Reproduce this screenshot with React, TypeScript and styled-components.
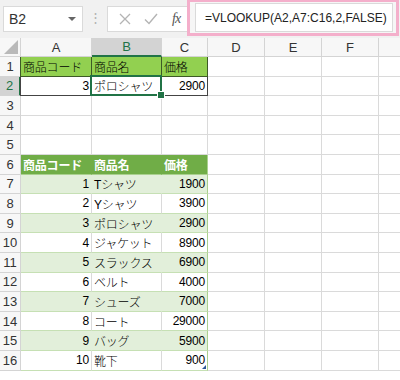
import React from 'react';
import styled, { createGlobalStyle, css } from 'styled-components';

const GlobalStyle = createGlobalStyle`
  * { box-sizing: border-box; }
  body {
    margin: 0;
    background: #ffffff;
    font-family: "Liberation Sans", "Noto Sans CJK JP", sans-serif;
    overflow: hidden;
  }
`;

const COLS = [
    { name: 'A', width: 71 },
    { name: 'B', width: 70 },
    { name: 'C', width: 46 },
    { name: 'D', width: 57 },
    { name: 'E', width: 57 },
    { name: 'F', width: 57 },
    { name: '', width: 40 },
];

type CellData = { text?: string; right?: boolean };
type RowKind = 'plain' | 'title' | 'input' | 'head' | 'band' | 'white';

const products: [string, string, string][] = [
    ['1', 'Tシャツ', '1900'],
    ['2', 'Yシャツ', '3900'],
    ['3', 'ポロシャツ', '2900'],
    ['4', 'ジャケット', '8900'],
    ['5', 'スラックス', '6900'],
    ['6', 'ベルト', '4000'],
    ['7', 'シューズ', '7000'],
    ['8', 'コート', '29000'],
    ['9', 'バッグ', '5900'],
    ['10', '靴下', '900'],
];

const rows: { kind: RowKind; cells: CellData[] }[] = [
    { kind: 'title', cells: [{ text: '商品コード' }, { text: '商品名' }, { text: '価格' }] },
    { kind: 'input', cells: [{ text: '3', right: true }, { text: 'ポロシャツ' }, { text: '2900', right: true }] },
    { kind: 'plain', cells: [] },
    { kind: 'plain', cells: [] },
    { kind: 'plain', cells: [] },
    { kind: 'head', cells: [{ text: '商品コード' }, { text: '商品名' }, { text: '価格' }] },
    ...products.map(([code, name, price], i) => ({
        kind: (i % 2 === 0 ? 'band' : 'white') as RowKind,
        cells: [{ text: code, right: true }, { text: name }, { text: price, right: true }],
    })),
];

const App: React.FC = () => {
    return (
        <Page>
            <GlobalStyle/>
            <TopBar>
                <NameBox>
                    <span>B2</span>
                    <Caret/>
                </NameBox>
                <Grip>⋮</Grip>
                <ButtonBox>
                    <svg width="12" height="12" viewBox="0 0 12 12">
                        <path d="M1 1 L11 11 M11 1 L1 11" stroke="#b4b4b4" strokeWidth="1.3" fill="none"/>
                    </svg>
                    <svg width="14" height="12" viewBox="0 0 14 12">
                        <path d="M1 6.5 L5 10.5 L13 1" stroke="#b4b4b4" strokeWidth="1.4" fill="none"/>
                    </svg>
                    <Fx>fx</Fx>
                </ButtonBox>
                <FormulaFrame>
                    <FormulaInput>=VLOOKUP(A2,A7:C16,2,FALSE)</FormulaInput>
                </FormulaFrame>
            </TopBar>
            <Sheet>
                <Row>
                    <Corner>
                        <svg width="14" height="14" viewBox="0 0 14 14">
                            <path d="M14 0 L14 14 L0 14 Z" fill="#b9b9b9"/>
                        </svg>
                    </Corner>
                    {COLS.map((c, i) => (
                        <ColHead key={i} width={c.width} selected={c.name === 'B'}>
                            {c.name}
                        </ColHead>
                    ))}
                </Row>
                {rows.map((row, r) => (
                    <Row key={r}>
                        <RowHead selected={r === 1}>{r + 1}</RowHead>
                        {COLS.map((c, i) => {
                            const data = row.cells[i];
                            const inTable = i < 3;
                            return (
                                <Cell
                                    key={i}
                                    width={c.width}
                                    kind={inTable ? row.kind : 'plain'}
                                    col={i}
                                    right={data?.right}
                                    selected={r === 1 && i === 1}
                                    last={r === rows.length - 1 && i === 2}
                                >
                                    {data?.text}
                                </Cell>
                            );
                        })}
                    </Row>
                ))}
            </Sheet>
        </Page>
    );
};

export default App;

const Page = styled.div`
  width: 400px;
  height: 380px;
  overflow: hidden;
  background: #ffffff;
`;

const TopBar = styled.div`
  height: 38px;
  background: #f1f1f1;
  display: flex;
  align-items: flex-start;
  padding-left: 3px;
`;

const NameBox = styled.div`
  flex-shrink: 0;
  width: 80px;
  height: 26px;
  margin-top: 6px;
  background: #ffffff;
  border: 1px solid #dadada;
  display: flex;
  align-items: center;
  justify-content: space-between;
  padding: 0 6px 0 5px;
  font-size: 14px;
  color: #333;
`;

const Caret = styled.div`
  width: 0;
  height: 0;
  border-left: 4px solid transparent;
  border-right: 4px solid transparent;
  border-top: 4px solid #666;
`;

const Grip = styled.div`
  flex-shrink: 0;
  width: 24px;
  margin-top: 11px;
  text-align: center;
  font-size: 13px;
  line-height: 14px;
  color: #b0b0b0;
`;

const ButtonBox = styled.div`
  flex-shrink: 0;
  width: 80px;
  height: 26px;
  margin-top: 6px;
  background: #ffffff;
  border: 1px solid #dadada;
  border-right: none;
  display: flex;
  align-items: center;
  justify-content: space-around;
  padding: 0 0 0 4px;
`;

const Fx = styled.span`
  font-family: "Liberation Serif", serif;
  font-style: italic;
  font-size: 14px;
  color: #555;
  letter-spacing: -1px;
`;

const FormulaFrame = styled.div`
  flex: 1;
  min-width: 0;
  height: 36px;
  margin-right: 1px;
  border: 3px solid #f4afcb;
  border-top-width: 2px;
  padding: 1px 3px 0 5px;
  background: #f6f6f6;
`;

const FormulaInput = styled.div`
  height: 29px;
  background: #ffffff;
  border: 1px solid #dadada;
  display: flex;
  align-items: center;
  padding-left: 9px;
  font-size: 12px;
  color: #222;
  white-space: nowrap;
  overflow: hidden;
`;

const Sheet = styled.div`
  display: flex;
  flex-direction: column;
`;

const Row = styled.div`
  display: flex;
  height: 19.6px;
  &:first-child {
    height: 19px;
  }
`;

const Corner = styled.div`
  width: 21px;
  flex-shrink: 0;
  background: #f7f7f7;
  border-right: 1px solid #d4d4d4;
  border-bottom: 1px solid #d4d4d4;
  display: flex;
  align-items: flex-end;
  justify-content: flex-end;
  padding: 0 2px 2px 0;
`;

const headBase = css`
  flex-shrink: 0;
  display: flex;
  align-items: center;
  justify-content: center;
  font-size: 13px;
  color: #333;
  background: #f7f7f7;
`;

const ColHead = styled.div<{ width: number; selected?: boolean }>`
  ${headBase};
  width: ${p => p.width}px;
  border-right: 1px solid #d4d4d4;
  border-bottom: ${p => p.selected ? '2px solid #217346' : '1px solid #d4d4d4'};
  background: ${p => p.selected ? '#d3d3d3' : '#f7f7f7'};
  color: ${p => p.selected ? '#217346' : '#333'};
`;

const RowHead = styled.div<{ selected?: boolean }>`
  ${headBase};
  width: 21px;
  border-bottom: 1px solid #d4d4d4;
  border-right: ${p => p.selected ? '2px solid #217346' : '1px solid #d4d4d4'};
  background: ${p => p.selected ? '#d3d3d3' : '#f7f7f7'};
  color: ${p => p.selected ? '#217346' : '#333'};
`;

const kindStyles: Record<RowKind, ReturnType<typeof css>> = {
    plain: css`
      background: #ffffff;
      border-right: 1px solid #dadada;
      border-bottom: 1px solid #dadada;
    `,
    title: css`
      background: #92d050;
      color: #000;
      border-right: 1px solid #3d5a26;
      border-bottom: 1px solid #3d5a26;
    `,
    input: css`
      background: #ffffff;
      color: #000;
      border-right: 1px solid #444;
      border-bottom: 1px solid #444;
    `,
    head: css`
      background: #70ad47;
      color: #ffffff;
      font-weight: bold;
      border-right: 1px solid #70ad47;
      border-bottom: 1px solid #a9d08e;
    `,
    band: css`
      background: #e2efda;
      color: #000;
      border-right: 1px solid #e2efda;
      border-bottom: 1px solid #c6e0b4;
    `,
    white: css`
      background: #ffffff;
      color: #000;
      border-right: 1px solid #dadada;
      border-bottom: 1px solid #c6e0b4;
    `,
};

const Cell = styled.div<{
    width: number;
    kind: RowKind;
    col: number;
    right?: boolean;
    selected?: boolean;
    last?: boolean;
}>`
  position: relative;
  flex-shrink: 0;
  width: ${p => p.width}px;
  display: flex;
  align-items: center;
  justify-content: ${p => p.right ? 'flex-end' : 'flex-start'};
  padding: 0 2px;
  font-size: 12px;
  font-weight: 300;
  letter-spacing: -0.2px;
  white-space: nowrap;
  overflow: visible;
  ${p => kindStyles[p.kind]};
  ${p => p.col === 0 && (p.kind === 'title' || p.kind === 'input') && css`
    margin-left: -1px;
    width: ${p.width + 1}px;
    border-left: 1px solid ${p.kind === 'title' ? '#3d5a26' : '#444'};
  `};
  ${p => p.col === 2 && ['head', 'band', 'white'].includes(p.kind) && css`
    border-right: 1px solid #a9d08e;
  `};
  ${p => p.selected && css`
    &::after {
      content: '';
      position: absolute;
      left: -2px;
      top: -2px;
      right: -1px;
      bottom: -1px;
      border: 2px solid #217346;
    }
    &::before {
      content: '';
      position: absolute;
      right: -4px;
      bottom: -4px;
      width: 6px;
      height: 6px;
      background: #217346;
      border: 1px solid #ffffff;
      z-index: 1;
    }
  `};
  ${p => p.last && css`
    &::after {
      content: '';
      position: absolute;
      right: 1px;
      bottom: 1px;
      width: 0;
      height: 0;
      border-left: 4px solid transparent;
      border-bottom: 4px solid #2b5797;
    }
  `};
`;
